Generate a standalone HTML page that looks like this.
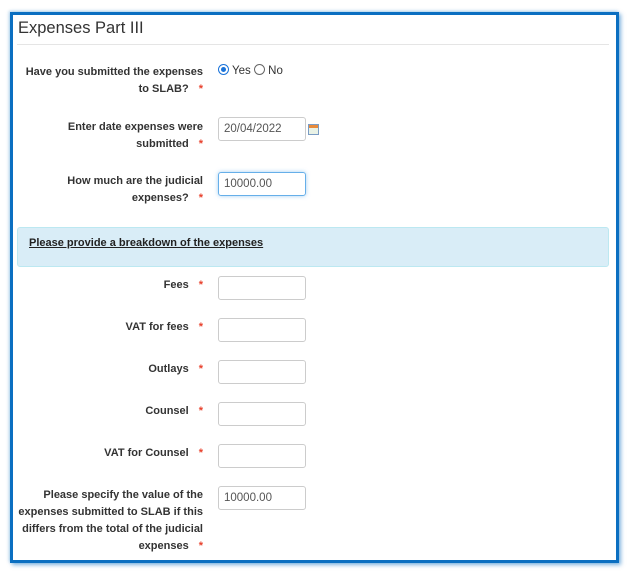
<!DOCTYPE html>
<html><head><style>
body{margin:0;width:629px;height:573px;background:#fff;font-family:"Liberation Sans",Arial,sans-serif;position:relative;overflow:hidden}
.frame{position:absolute;left:10px;top:12px;width:603px;height:545px;border:3px solid #0b6fc1;box-shadow:2px 2px 4px rgba(11,111,193,.5),-1px -1px 3px rgba(11,111,193,.3);background:#fff}
.t{position:absolute;left:18px;top:19px;font-size:16.5px;color:#333}
.hr{position:absolute;left:17px;top:44px;width:592px;height:1px;background:#e5e5e5}
.lab{position:absolute;right:426px;font-size:11px;font-weight:bold;color:#333;text-align:right;line-height:16.5px}
.lab b{color:#e8412c;margin-left:10px;font-weight:bold}
.in{position:absolute;left:218px;border:1px solid #ccc;border-radius:3px;font-size:11.5px;color:#555;line-height:22px;padding-left:5px;box-sizing:border-box;width:88px;height:24px}
.panel{position:absolute;left:17px;top:227px;width:590px;height:38px;background:#d9edf7;border:1px solid #bce8f1;border-radius:3px}
.panel span{position:absolute;left:11px;top:9px;font-size:11px;font-weight:bold;text-decoration:underline;color:#222}
</style></head><body>
<div class="frame"></div>
<div class="t">Expenses Part III</div>
<div class="hr"></div>
<div class="lab" style="top:64px">Have you submitted the expenses<br>to SLAB?<b>*</b></div>
<div style="position:absolute;left:218px;top:64px;font-size:11.5px;color:#333">
<span style="display:inline-block;width:9px;height:9px;border:1px solid #1a73d9;border-radius:50%;vertical-align:-1px;position:relative"><span style="position:absolute;left:2px;top:2px;width:5px;height:5px;border-radius:50%;background:#1a73d9"></span></span> Yes <span style="display:inline-block;width:9px;height:9px;border:1px solid #666;border-radius:50%;vertical-align:-1px"></span> No</div>
<div class="lab" style="top:119px">Enter date expenses were<br>submitted<b>*</b></div>
<div class="in" style="top:117px">20/04/2022</div>
<div style="position:absolute;left:308px;top:124px;width:9px;height:9px;border:1px solid #7a9cc4;background:linear-gradient(#e88b3c 0 3px,#e9f2e6 3px)"></div>
<div class="lab" style="top:173px">How much are the judicial<br>expenses?<b>*</b></div>
<div class="in" style="top:172px;border-color:#66afe9;box-shadow:0 0 4px rgba(102,175,233,.6)">10000.00</div>
<div class="panel"><span>Please provide a breakdown of the expenses</span></div>
<div class="lab" style="top:277px">Fees<b>*</b></div><div class="in" style="top:276px"></div>
<div class="lab" style="top:319px">VAT for fees<b>*</b></div><div class="in" style="top:318px"></div>
<div class="lab" style="top:361px">Outlays<b>*</b></div><div class="in" style="top:360px"></div>
<div class="lab" style="top:403px">Counsel<b>*</b></div><div class="in" style="top:402px"></div>
<div class="lab" style="top:445px">VAT for Counsel<b>*</b></div><div class="in" style="top:444px"></div>
<div class="lab" style="top:487px;line-height:17px">Please specify the value of the<br>expenses submitted to SLAB if this<br>differs from the total of the judicial<br>expenses<b>*</b></div>
<div class="in" style="top:486px">10000.00</div>
</body></html>
